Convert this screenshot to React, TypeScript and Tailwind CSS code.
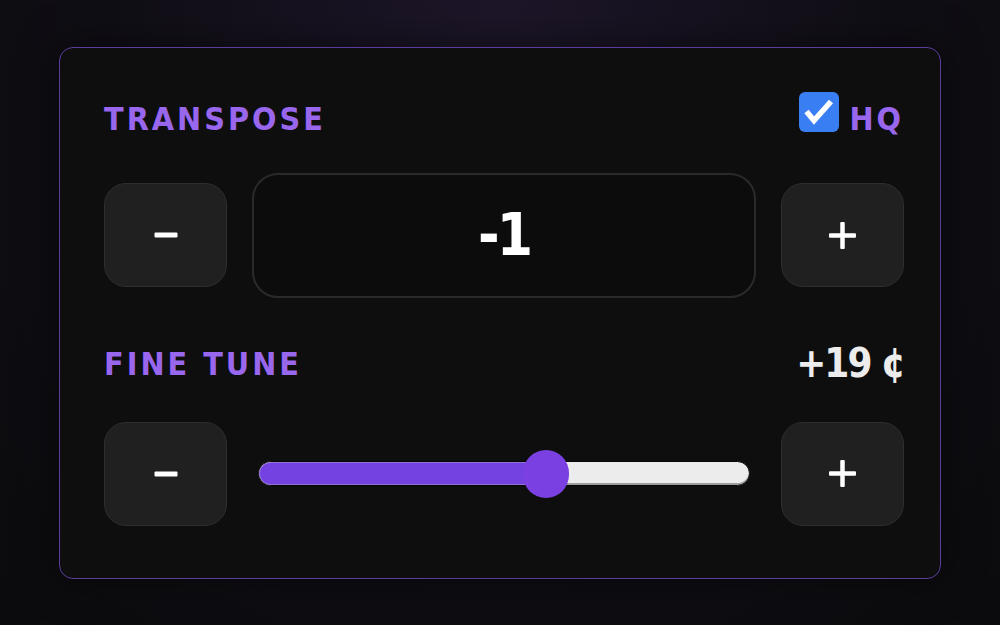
import { useState } from 'react';

const MIN = -100;
const MAX = 100;

function StepButton({ kind, onClick }: { kind: 'minus' | 'plus'; onClick: () => void }) {
  return (
    <button
      onClick={onClick}
      className="w-[123px] h-[104px] shrink-0 flex items-center justify-center rounded-[22px] bg-[#202020] border border-[#2e2e2e]"
    >
      {kind === 'minus' ? (
        <svg width="24" height="6" viewBox="0 0 24 6">
          <rect x="0.5" y="0.5" width="23" height="5" rx="1" fill="#fff" />
        </svg>
      ) : (
        <svg width="27" height="27" viewBox="0 0 27 27">
          <rect x="0" y="11.25" width="27" height="4.5" rx="1" fill="#fff" />
          <rect x="11.25" y="0" width="4.5" height="27" rx="1" fill="#fff" />
        </svg>
      )}
    </button>
  );
}

function Label({ children, className = '' }: { children: string; className?: string }) {
  return (
    <span
      className={`font-['Liberation_Sans_Narrow','DejaVu_Sans_Condensed','Liberation_Sans',sans-serif] font-bold text-[32px] leading-none tracking-[3px] text-[#9966ee] ${className}`}
    >
      {children}
    </span>
  );
}

export default function App() {
  const [semis, setSemis] = useState(-1);
  const [cents, setCents] = useState(19);
  const [hq, setHq] = useState(true);

  const frac = (cents - MIN) / (MAX - MIN);
  // thumb travels inside the track, 23px in from each end
  const thumbLeft = `calc(23px + (100% - 46px) * ${frac})`;

  return (
    <div className="min-h-screen flex items-center justify-center bg-[radial-gradient(ellipse_at_top,#1d1629_0%,#100e15_55%,#0b0b0d_100%)]">
      <div className="w-[882px] h-[532px] rounded-[14px] border border-[#5a3e9e] bg-[#0e0e0e] pt-[44px] pl-[44px] pr-[36px] shadow-[0_0_40px_rgba(0,0,0,0.5)]">
        <div className="h-[40px] flex items-end justify-between">
          <Label className="-mb-[3px]">TRANSPOSE</Label>
          <div className="flex items-end gap-[10px] cursor-pointer">
            <button
              onClick={() => setHq(!hq)}
              className={`w-[40px] h-[40px] rounded-[6px] flex items-center justify-center ${hq ? 'bg-[#3a7ef4]' : 'bg-[#eee]'}`}
            >
              {hq && (
                <svg width="40" height="40" viewBox="0 0 40 40">
                  <path d="M7.5 19.5 L15 28.5 L32 9.5" fill="none" stroke="#fff" strokeWidth="5.5" strokeLinejoin="miter" />
                </svg>
              )}
            </button>
            <Label className="-mb-[3px]">HQ</Label>
          </div>
        </div>

        <div className="mt-[41px] h-[125px] flex items-center gap-[25px]">
          <StepButton kind="minus" onClick={() => setSemis(semis - 1)} />
          <div className="flex-1 h-[125px] rounded-[26px] border-2 border-[#2a2a2a] bg-[#0c0c0c] flex items-center justify-center">
            <span className="font-['Liberation_Sans_Narrow','DejaVu_Sans_Condensed','Liberation_Sans',sans-serif] font-bold text-[58px] leading-none tracking-[-3px] text-white">
              {semis > 0 ? `+${semis}` : semis}
            </span>
          </div>
          <StepButton kind="plus" onClick={() => setSemis(semis + 1)} />
        </div>

        <div className="mt-[44px] h-[40px] flex items-end justify-between">
          <Label className="mb-[2px]">FINE TUNE</Label>
          <span className="-mb-[1px] font-['Liberation_Sans_Narrow','DejaVu_Sans_Condensed','Liberation_Sans',sans-serif] font-bold text-[40px] leading-none text-[#ececec] tracking-[-2px]">
            {cents > 0 ? `+${cents}` : cents} ¢
          </span>
        </div>

        <div className="mt-[40px] h-[104px] flex items-center gap-[25px]">
          <StepButton kind="minus" onClick={() => setCents(Math.max(MIN, cents - 1))} />
          <div className="flex-1 px-[6px]">
            <div className="relative h-[25px] rounded-full bg-[#ececec] border border-[#050505] shadow-[inset_0_-2px_0_#9d9d9d]">
              <div
                className="absolute left-0 top-0 bottom-0 rounded-full bg-[#7442e0] border border-[#9372d6]"
                style={{ width: thumbLeft }}
              />
              <div
                className="absolute top-1/2 w-[46px] h-[48px] -translate-x-1/2 -translate-y-1/2 rounded-full bg-[#7a40e2]"
                style={{ left: thumbLeft }}
              />
            </div>
          </div>
          <StepButton kind="plus" onClick={() => setCents(Math.min(MAX, cents + 1))} />
        </div>
      </div>
    </div>
  );
}
